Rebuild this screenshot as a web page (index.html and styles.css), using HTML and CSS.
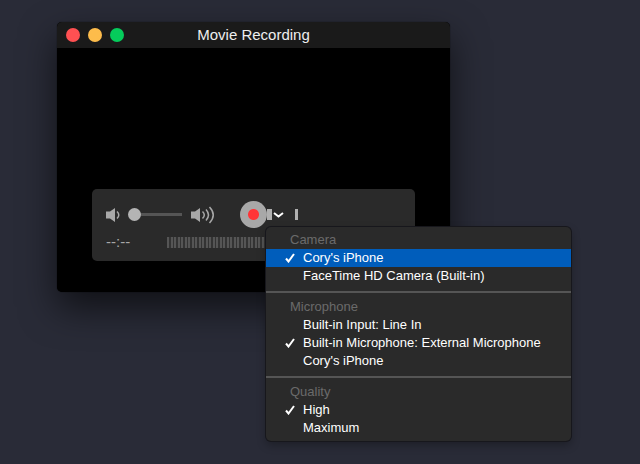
FILE: index.html
```html
<!DOCTYPE html>
<html lang="en">
<head>
  <meta charset="UTF-8">
  <meta name="viewport" content="width=device-width, initial-scale=1">
  <title>Movie Recording</title>
  <link rel="stylesheet" href="styles.css">
</head>
<body>
  <main class="desktop">
    <section class="window" aria-labelledby="windowTitle">
      <!-- Title bar -->
      <header class="titlebar">
        <div class="lights">
          <button class="light close" type="button" aria-label="Close"></button>
          <button class="light minimize" type="button" aria-label="Minimize"></button>
          <button class="light zoom" type="button" aria-label="Zoom"></button>
        </div>
        <h1 class="title" id="windowTitle">Movie Recording</h1>
      </header>

      <!-- Video preview with the floating controls -->
      <div class="preview">
        <div class="controls">
          <div class="control-row">
            <div class="volume">
              <svg class="speaker" width="14" height="16" viewBox="0 0 14 16" aria-hidden="true">
                <path class="icon-fill" d="M0 4.500h4l5-3.500v14l-5-3.500H0z"/>
                <path class="icon-line" d="M11 4.500q3.600 3.500 0 7"/>
              </svg>
              <input class="slider" type="range" min="0" max="100" value="0" aria-label="Volume">
              <svg class="speaker" width="24" height="18" viewBox="0 0 24 18" aria-hidden="true">
                <path class="icon-fill" d="M0 5.500h4l5-3.500v14l-5-3.500H0z"/>
                <path class="icon-line" d="M11.500 5.500q3.600 3.500 0 7M15 3.500q5 5.500 0 11M18.500 1q7.500 8 0 16"/>
              </svg>
            </div>
            <div class="record-group">
              <button class="record" type="button" aria-label="Record"></button>
              <div class="picker">
                <span class="bar wide"></span>
                <button class="options" type="button" aria-label="Recording options" aria-haspopup="menu" aria-expanded="true">
                  <svg width="11" height="7" viewBox="0 0 11 7" aria-hidden="true">
                    <path class="chevron" d="M1 2l4.500 3.500L10 2"/>
                  </svg>
                </button>

                <!-- Options menu -->
                <div class="menu" role="menu">
                  <div class="group" role="group" aria-labelledby="cameraLabel">
                    <div class="group-label" id="cameraLabel">Camera</div>
                    <button class="item active" type="button" role="menuitemradio" aria-checked="true">
                      <svg class="check" width="10" height="10" viewBox="0 0 10 10" aria-hidden="true"><path d="M1 5.500l2.500 3L9 1"/></svg>
                      Cory's iPhone
                    </button>
                    <button class="item" type="button" role="menuitemradio" aria-checked="false">FaceTime HD Camera (Built-in)</button>
                  </div>
                  <hr class="separator">
                  <div class="group" role="group" aria-labelledby="micLabel">
                    <div class="group-label" id="micLabel">Microphone</div>
                    <button class="item" type="button" role="menuitemradio" aria-checked="false">Built-in Input: Line In</button>
                    <button class="item" type="button" role="menuitemradio" aria-checked="true">
                      <svg class="check" width="10" height="10" viewBox="0 0 10 10" aria-hidden="true"><path d="M1 5.500l2.500 3L9 1"/></svg>
                      Built-in Microphone: External Microphone
                    </button>
                    <button class="item" type="button" role="menuitemradio" aria-checked="false">Cory's iPhone</button>
                  </div>
                  <hr class="separator">
                  <div class="group" role="group" aria-labelledby="qualityLabel">
                    <div class="group-label" id="qualityLabel">Quality</div>
                    <button class="item" type="button" role="menuitemradio" aria-checked="true">
                      <svg class="check" width="10" height="10" viewBox="0 0 10 10" aria-hidden="true"><path d="M1 5.500l2.500 3L9 1"/></svg>
                      High
                    </button>
                    <button class="item" type="button" role="menuitemradio" aria-checked="false">Maximum</button>
                  </div>
                </div>
              </div>
              <span class="bar"></span>
            </div>
          </div>
          <div class="status-row">
            <span class="time">--:--</span>
            <div class="levels"></div>
          </div>
        </div>
      </div>
    </section>
  </main>
</body>
</html>
```
FILE: styles.css
```css
* {
  margin: 0;
  padding: 0;
  box-sizing: border-box;
}
body {
  font-family: "Liberation Sans", Arial, sans-serif;
  font-size: 13px;
  line-height: 18px;
  color: #fff;
  background: #292b37;
}
button {
  font: inherit;
  color: inherit;
  background: none;
  border: 0;
}
.desktop {
  min-height: 100vh;
  padding: 22px 190px 0 57px;
}

/* Window */
.window {
  background: #000;
  border-radius: 5px;
  box-shadow: 0 0 1px #000, 0 16px 36px rgba(0, 0, 0, 0.6);
}
.titlebar {
  display: grid;
  grid-template-columns: 1fr auto 1fr;
  align-items: center;
  height: 26px;
  padding: 0 9px;
  background: #1a1a1a;
  border-radius: 5px 5px 0 0;
}
.lights {
  display: flex;
  gap: 8px;
}
.light {
  width: 14px;
  height: 14px;
  border-radius: 50%;
}
.close { background: #ff5052; }
.minimize { background: #fdbc4b; }
.zoom { background: #05cc5b; }
.title {
  font-size: 15px;
  font-weight: normal;
  color: #eee;
}
.preview {
  padding: 141px 35px 31px;
}

/* Floating controls */
.controls {
  display: flex;
  flex-direction: column;
  gap: 5px;
  padding: 12px 14px 10px;
  background: #2a2a2a;
  border-radius: 5px;
}
.control-row,
.status-row,
.volume,
.record-group,
.picker {
  display: flex;
  align-items: center;
}
.control-row {
  gap: 25px;
}
.volume {
  gap: 8px;
}
.speaker {
  flex: none;
}
.icon-fill {
  fill: #a8a8a8;
}
.icon-line {
  fill: none;
  stroke: #a8a8a8;
  stroke-width: 1.5;
}
.slider {
  -webkit-appearance: none;
  appearance: none;
  width: 55px;
  height: 14px;
  background: linear-gradient(#555, #555) center / 53px 3px no-repeat;
}
.slider::-webkit-slider-thumb {
  -webkit-appearance: none;
  width: 13px;
  height: 13px;
  background: #b4b4b4;
  border-radius: 50%;
}
.record {
  width: 27px;
  height: 27px;
  background: radial-gradient(circle, #ff3437 5px, #a8a8a8 6px);
  border-radius: 50%;
}
.picker {
  position: relative;
  height: 24px;
}
.bar {
  width: 3px;
  height: 11px;
  background: #b0b0b0;
}
.wide {
  width: 5px;
}
.options {
  display: flex;
  padding: 0 1px;
  margin-right: 10px;
}
.chevron {
  fill: none;
  stroke: #fff;
  stroke-width: 2;
}
.status-row {
  gap: 37px;
}
.time {
  font-size: 15px;
  color: #a8a8a8;
}
.levels {
  flex: 1;
  height: 11px;
  background: repeating-linear-gradient(90deg, #555 0 2px, #333 2px 4px, #555 4px 6px, #333 6px 7px);
}

/* Options menu, drops down from the arrow next to the record button */
.menu {
  position: absolute;
  top: 100%;
  left: -1px;
  z-index: 1;
  padding: 4px 0;
  background: #2a2a2a;
  border-radius: 5px;
  box-shadow: 0 0 0 1px #17171c, 0 4px 10px rgba(0, 0, 0, 0.3);
}
.group-label {
  padding-left: 24px;
  color: #6a6a6a;
}
.item {
  display: flex;
  align-items: center;
  width: 100%;
  padding: 0 30px 0 37px;
  white-space: nowrap;
}
.check {
  margin: 0 8px 0 -18px;
  fill: none;
  stroke: #fff;
  stroke-width: 2;
}
.active {
  background: #005dbb;
}
.separator {
  height: 2px;
  margin: 6px 0 5px;
  background: #555;
  border: 0;
}
```
